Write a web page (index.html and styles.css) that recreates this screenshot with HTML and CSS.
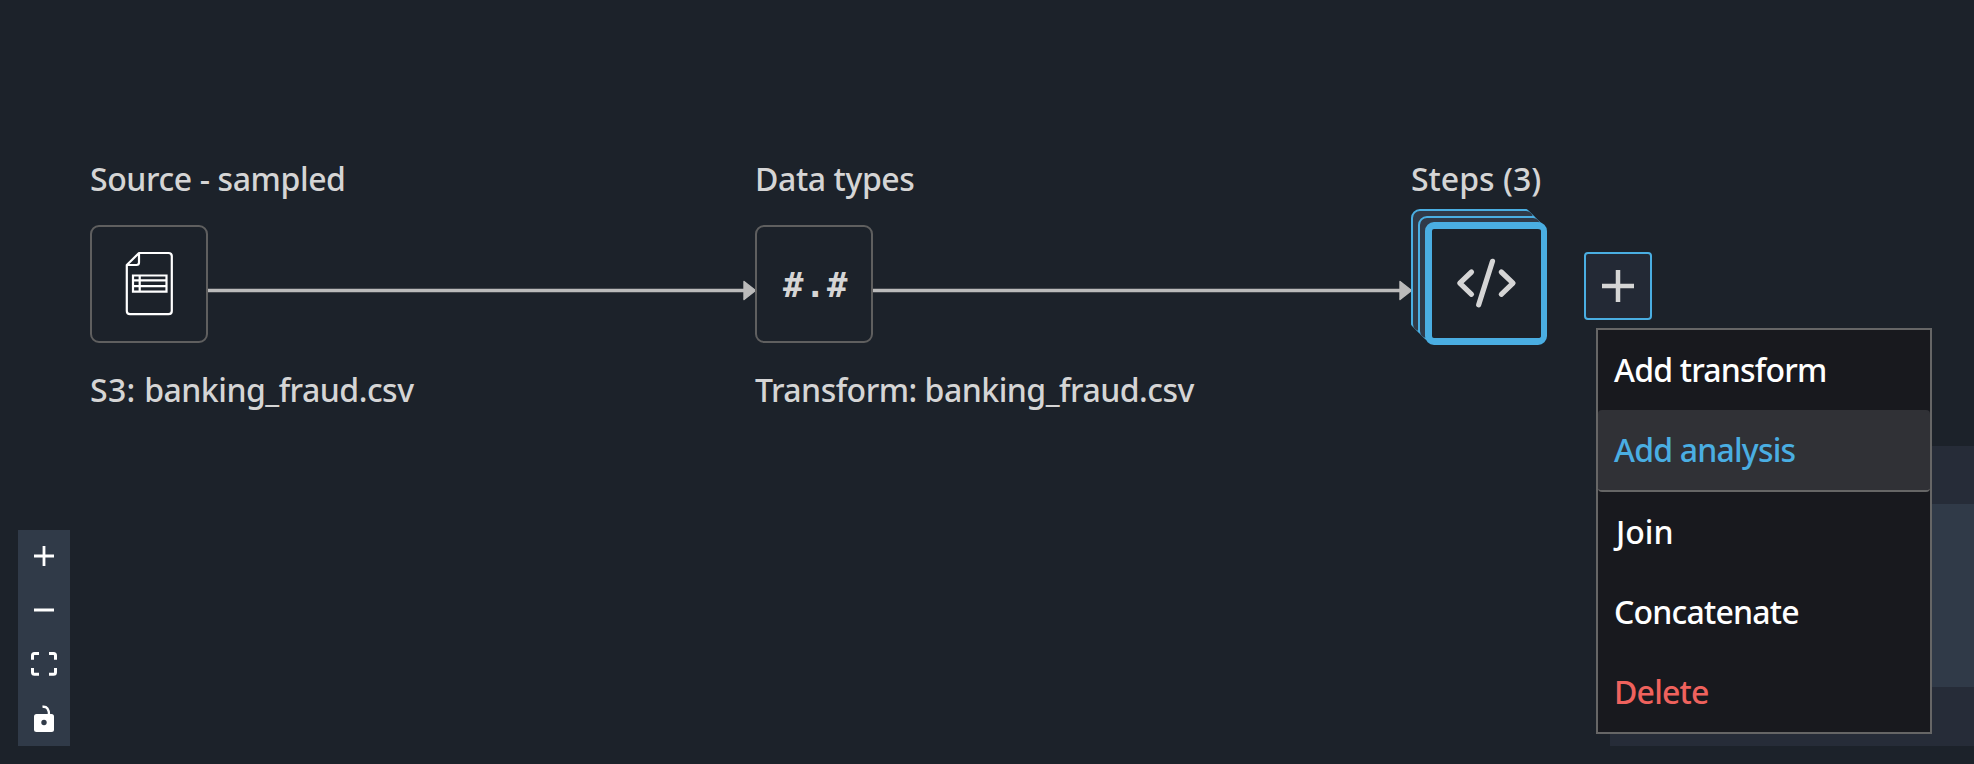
FILE: index.html
```html
<!DOCTYPE html>
<html lang="en">
<head>
<meta charset="utf-8">
<title>Data flow</title>
<link rel="stylesheet" href="styles.css">
</head>
<body>
<main class="canvas">
  <svg class="edges" width="1974" height="764" viewBox="0 0 1974 764">
    <path class="edge" d="M208 290.5H746M873 290.5H1401"/>
    <path class="arrow" d="M744 281.5L755.5 290.5L744 299.5ZM1400 281.5L1411.5 290.5L1400 299.5Z"/>
  </svg>

  <section class="node node-source">
    <div class="label l-source">Source - sampled</div>
    <div class="box">
      <svg class="file" width="50" height="66" viewBox="0 0 50 66" fill="none" stroke="#fff" stroke-width="2.2" stroke-linejoin="round">
        <path d="M14 2H43.500Q46.800 2 46.800 5.300V60Q46.800 63.200 43.500 63.200H5Q1.800 63.200 1.800 60V14ZM14 2V11.500Q14 14 11.500 14H1.800"/>
        <path stroke-linejoin="miter" d="M8 24.500H41.500V40.700H8ZM8 29.300H41.500M8 35.200H41.500M14.700 24.500V40.700"/>
      </svg>
    </div>
    <div class="label l-s3">S3: <span class="name">banking_fraud.csv</span></div>
  </section>

  <section class="node node-types">
    <div class="label l-types">Data types</div>
    <div class="box"><span class="hash">#.#</span></div>
    <div class="label l-transform">Transform: banking_fraud.csv</div>
  </section>

  <section class="node node-steps">
    <div class="label">Steps (3)</div>
    <div class="stack">
      <div class="sheet"></div>
      <div class="sheet second"></div>
      <div class="card">
        <svg width="62" height="52" viewBox="0 0 62 52" fill="none" stroke="#d5d5d5" stroke-width="5.200" stroke-linecap="round" stroke-linejoin="round">
          <path d="M16.500 15L4.800 26.200L16.500 37.300M46.300 15L58 26.200L46.300 37.300M37.500 4.300L23.700 47.800"/>
        </svg>
      </div>
    </div>
  </section>

  <button class="add" aria-label="Add step">
    <svg width="32" height="32" viewBox="0 0 32 32" stroke="#d5d5d5" stroke-width="4.500"><path d="M0 16H32M16 0V32"/></svg>
  </button>

  <aside class="minimap"><div class="viewport"></div></aside>

  <ul class="menu">
    <li>Add transform</li>
    <li class="active">Add analysis</li>
    <li class="join">Join</li>
    <li>Concatenate</li>
    <li class="danger">Delete</li>
  </ul>

  <nav class="controls">
    <div class="control"><svg width="26" height="26" viewBox="0 0 26 26" stroke="#fff" stroke-width="2.800"><path d="M3 12H23M13 2V22"/></svg></div>
    <div class="control"><svg width="26" height="26" viewBox="0 0 26 26" stroke="#fff" stroke-width="3"><path d="M3 12H23"/></svg></div>
    <div class="control"><svg width="26" height="26" viewBox="0 1 26 26" fill="none" stroke="#fff" stroke-width="3"><path d="M1.500 8.800V4.500Q1.500 2.500 3.500 2.500H8M18 2.500H22.500Q24.500 2.500 24.500 4.500V8.800M24.500 17V21.200Q24.500 23.200 22.500 23.200H18M8 23.200H3.500Q1.500 23.200 1.500 21.200V17"/></svg></div>
    <div class="control"><svg width="26" height="30" viewBox="0 0 26 30"><rect x="3" y="10" width="20" height="18" rx="2.500" fill="#fff"/><path d="M11.500 2.800C16 2.200 18 5 18 11" fill="none" stroke="#fff" stroke-width="2.400"/><circle cx="13" cy="18.500" r="2.700" fill="#303a48"/></svg></div>
  </nav>
</main>
</body>
</html>
```
FILE: styles.css
```css
* { box-sizing: border-box; }
body {
  margin: 0;
  background: #1c222a;
  font-family: "Noto Sans", sans-serif;
  font-size: 32px;
  font-weight: 500;
  line-height: 44px;
  color: #d5d5d5;
}
.canvas { position: relative; width: 1974px; height: 764px; overflow: hidden; }
svg { display: block; }

.edges { position: absolute; inset: 0; }
.edge { fill: none; stroke: #bbb; stroke-width: 3.4; }
.arrow { fill: #bbb; stroke: #bbb; stroke-width: 1.4; stroke-linejoin: round; }

.node { position: absolute; top: 157px; display: flex; flex-direction: column; align-items: flex-start; }
.node-source { left: 90px; }
.node-types { left: 755px; }
.node-steps { left: 1411px; gap: 8px; }
.label { white-space: nowrap; }
.l-source, .l-types { letter-spacing: -0.4px; }
.l-s3 { letter-spacing: 0.3px; }
.name { letter-spacing: -0.5px; }
.l-transform { letter-spacing: -0.5px; }
.box {
  display: flex;
  align-items: center;
  justify-content: center;
  width: 118px;
  height: 118px;
  margin: 24px 0 25px;
  border: 2px solid #5f5f5f;
  border-radius: 9px;
}
.file { margin: 0 0 1px 1px; }
.hash { padding: 2px 0 0 4px; font: bold 34px/40px "DejaVu Sans Mono", monospace; letter-spacing: 1.5px; }

.stack { display: grid; justify-items: start; align-items: start; }
.sheet, .card { grid-area: 1 / 1; border-radius: 9px; }
.sheet {
  width: 124px;
  height: 124px;
  border: 2px solid #4aaee2;
  background: #303a48;
  clip-path: polygon(0 0, 116px 0, 124px 8px, 8px 124px, 0 116px);
}
.second { margin: 7px 0 0 7px; }
.card {
  z-index: 1;
  display: flex;
  align-items: center;
  justify-content: center;
  width: 122px;
  height: 123px;
  margin: 13px 0 0 14px;
  padding: 0 2px 2px 0;
  border: 7px solid #4aaee2;
  border-width: 7px 6px 7px 7px;
  background: #1c222a;
}

.add {
  position: absolute;
  left: 1584px;
  top: 252px;
  display: flex;
  align-items: center;
  justify-content: center;
  width: 68px;
  height: 68px;
  padding: 0;
  border: 2px solid #4aaee2;
  border-radius: 4px;
  background: #232935;
}

.minimap { position: absolute; left: 1610px; top: 446px; width: 364px; height: 300px; padding-top: 58px; background: #262c38; }
.viewport { height: 183px; background: #303a48; }

.menu {
  position: absolute;
  left: 1596px;
  top: 328px;
  width: 336px;
  margin: 0;
  padding: 0;
  border: 2px solid #666;
  background: #18191e;
  color: #fff;
  letter-spacing: -0.8px;
  list-style: none;
}
.menu li { height: 80px; padding: 18px 16px; white-space: nowrap; }
.menu .active { height: 82px; border-bottom: 2px solid #666; border-radius: 4px; background: #303136; color: #4aaee2; }
.menu .join { padding-left: 18px; letter-spacing: 0; }
.menu .danger { color: #ef625d; }

.controls { position: absolute; left: 18px; top: 530px; width: 52px; display: grid; grid-template-rows: repeat(4, 54px); background: #303a48; }
.control { display: flex; align-items: center; justify-content: center; }
```
